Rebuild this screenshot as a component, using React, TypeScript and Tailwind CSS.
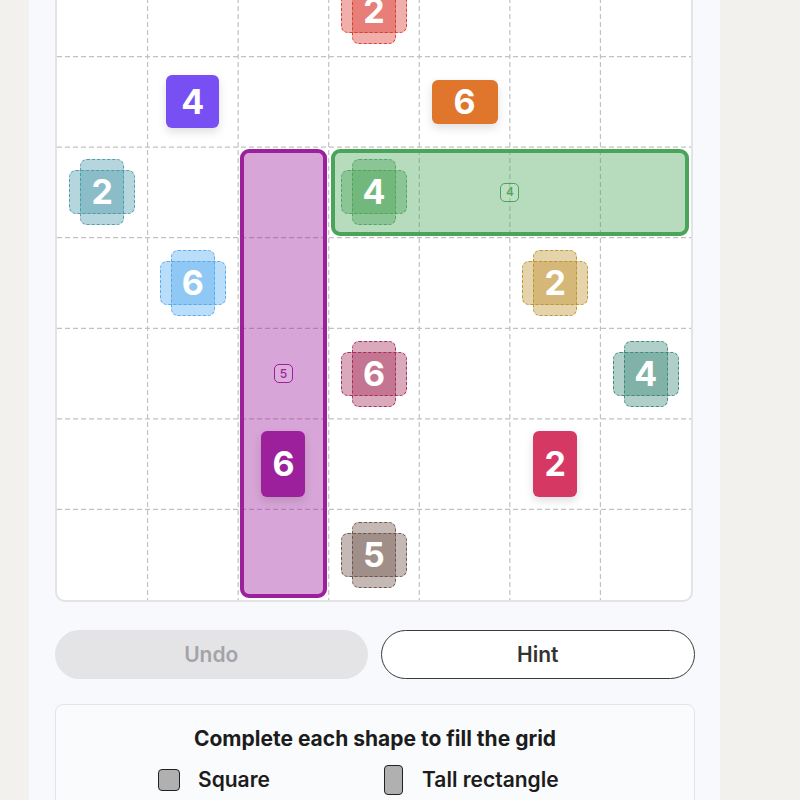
import React from "react";

const N = 7;
const CELL = 634 / N;

type Shape = "square" | "wide" | "tall";

const REGIONS = [
  { col: 2, row: 2, w: 1, h: 5, rgb: "156,31,156", area: 5 },
  { col: 3, row: 2, w: 4, h: 1, rgb: "74,165,90", area: 4 },
];

const CLUES = [
  { col: 3, row: 0, n: 2, rgb: "218,56,44" },
  { col: 0, row: 2, n: 2, rgb: "73,153,170" },
  { col: 3, row: 2, n: 4, rgb: "74,165,90" },
  { col: 1, row: 3, n: 6, rgb: "82,169,239" },
  { col: 5, row: 3, n: 2, rgb: "189,146,44" },
  { col: 3, row: 4, n: 6, rgb: "163,39,85" },
  { col: 6, row: 4, n: 4, rgb: "57,135,119" },
  { col: 3, row: 6, n: 5, rgb: "107,80,69" },
];

const TILES: { col: number; row: number; n: number; shape: Shape; bg: string }[] = [
  { col: 1, row: 1, n: 4, shape: "square", bg: "#774ff2" },
  { col: 4, row: 1, n: 6, shape: "wide", bg: "#e0752c" },
  { col: 2, row: 5, n: 6, shape: "tall", bg: "#9c1f9c" },
  { col: 5, row: 5, n: 2, shape: "tall", bg: "#d63864" },
];

const TILE_SIZE: Record<Shape, string> = {
  square: "w-[53px] h-[53px]",
  wide: "w-[66px] h-[44px]",
  tall: "w-[44px] h-[66px]",
};

function place(col: number, row: number, w = 1, h = 1) {
  return { gridColumn: `${col + 1} / span ${w}`, gridRow: `${row + 1} / span ${h}` };
}

function GridLines() {
  const ticks = Array.from({ length: N - 1 }, (_, i) => (i + 1) * CELL);
  return (
    <svg className="absolute inset-0 h-full w-full" viewBox="0 0 634 634">
      {ticks.map((t) => (
        <g key={t} stroke="#c2c2c2" strokeWidth="1.2" strokeDasharray="5 3">
          <line x1={t} y1="0" x2={t} y2="634" />
          <line x1="0" y1={t} x2="634" y2={t} />
        </g>
      ))}
    </svg>
  );
}

// undecided clue: wide and tall outlines stacked into a plus
function Clue({ n, rgb }: { n: number; rgb: string }) {
  const piece = {
    background: `rgba(${rgb},0.4)`,
    borderColor: `rgba(${rgb},0.9)`,
  };
  return (
    <div className="relative h-[66px] w-[66px]">
      <div className="absolute left-0 top-[11px] h-[44px] w-[66px] rounded-[7px] border-[1.5px] border-dashed" style={piece} />
      <div className="absolute left-[11px] top-0 h-[66px] w-[44px] rounded-[7px] border-[1.5px] border-dashed" style={piece} />
      <span className="absolute inset-0 flex items-center justify-center text-[34px] font-bold leading-none text-white">{n}</span>
    </div>
  );
}

function Board() {
  return (
    <div className="-mt-[36px] h-[638px] w-[638px] shrink-0 rounded-[10px] border-2 border-[#e3e3e3] bg-white">
      <div className="relative grid h-[634px] w-[634px] grid-cols-7 grid-rows-7">
        <GridLines />
        {REGIONS.map((r) => (
          <div
            key={`${r.col}-${r.row}`}
            className="relative m-[2px] flex items-center justify-center rounded-[9px] border-4"
            style={{ ...place(r.col, r.row, r.w, r.h), background: `rgba(${r.rgb},0.4)`, borderColor: `rgb(${r.rgb})` }}
          >
            <span
              className="flex h-[19px] w-[19px] items-center justify-center rounded-[5px] border-[1.5px] bg-white/10 text-[12px] font-medium leading-none"
              style={{ borderColor: `rgb(${r.rgb})`, color: `rgb(${r.rgb})` }}
            >
              {r.area}
            </span>
          </div>
        ))}
        {CLUES.map((c) => (
          <div key={`${c.col}-${c.row}`} className="relative flex items-center justify-center" style={place(c.col, c.row)}>
            <Clue n={c.n} rgb={c.rgb} />
          </div>
        ))}
        {TILES.map((t) => (
          <div key={`${t.col}-${t.row}`} className="relative flex items-center justify-center" style={place(t.col, t.row)}>
            <div
              className={`flex items-center justify-center rounded-[6px] text-[34px] font-bold leading-none text-white shadow-[0_4px_10px_rgba(0,0,0,0.13)] ${TILE_SIZE[t.shape]}`}
              style={{ background: t.bg }}
            >
              {t.n}
            </div>
          </div>
        ))}
      </div>
    </div>
  );
}

export default function App() {
  return (
    <div className="h-[800px] overflow-hidden bg-[#f2f1ed] font-['Inter','Noto_Sans',sans-serif] text-[#1c1c1c]">
      <div className="ml-[29px] flex h-full w-[691px] flex-col items-start bg-[#f8f9fc] pl-[26px]">
        <Board />

        <div className="mt-7 flex w-[640px] shrink-0 gap-[13px]">
          <button className="h-[49px] flex-1 rounded-full bg-[#e4e4e7] text-[21px] font-semibold text-[#a3a3a8]">Undo</button>
          <button className="h-[49px] flex-1 rounded-full border-[1.5px] border-[#3a3a3a] bg-white text-[21px] font-semibold text-[#333]">
            Hint
          </button>
        </div>

        <div className="mt-[25px] h-[200px] w-[640px] shrink-0 rounded-lg border border-[#e4e5e9] bg-[#fafbfd] pt-5">
          <h2 className="text-center text-[21px] font-bold leading-7">Complete each shape to fill the grid</h2>
          <div className="ml-[100px] mt-3 grid grid-cols-[224px_224px] gap-y-3">
            <div className="flex items-center gap-4">
              <span className="flex w-[26px] justify-center">
                <span className="h-[22px] w-[22px] rounded-[4px] border-[1.5px] border-[#222] bg-[#b0b0b0]" />
              </span>
              <span className="text-[21px] font-semibold leading-7">Square</span>
            </div>
            <div className="flex items-center gap-4">
              <span className="flex w-[26px] justify-center">
                <span className="h-[30px] w-[19px] rounded-[4px] border-[1.5px] border-[#222] bg-[#b0b0b0]" />
              </span>
              <span className="text-[21px] font-semibold leading-7">Tall rectangle</span>
            </div>
          </div>
        </div>
      </div>
    </div>
  );
}
